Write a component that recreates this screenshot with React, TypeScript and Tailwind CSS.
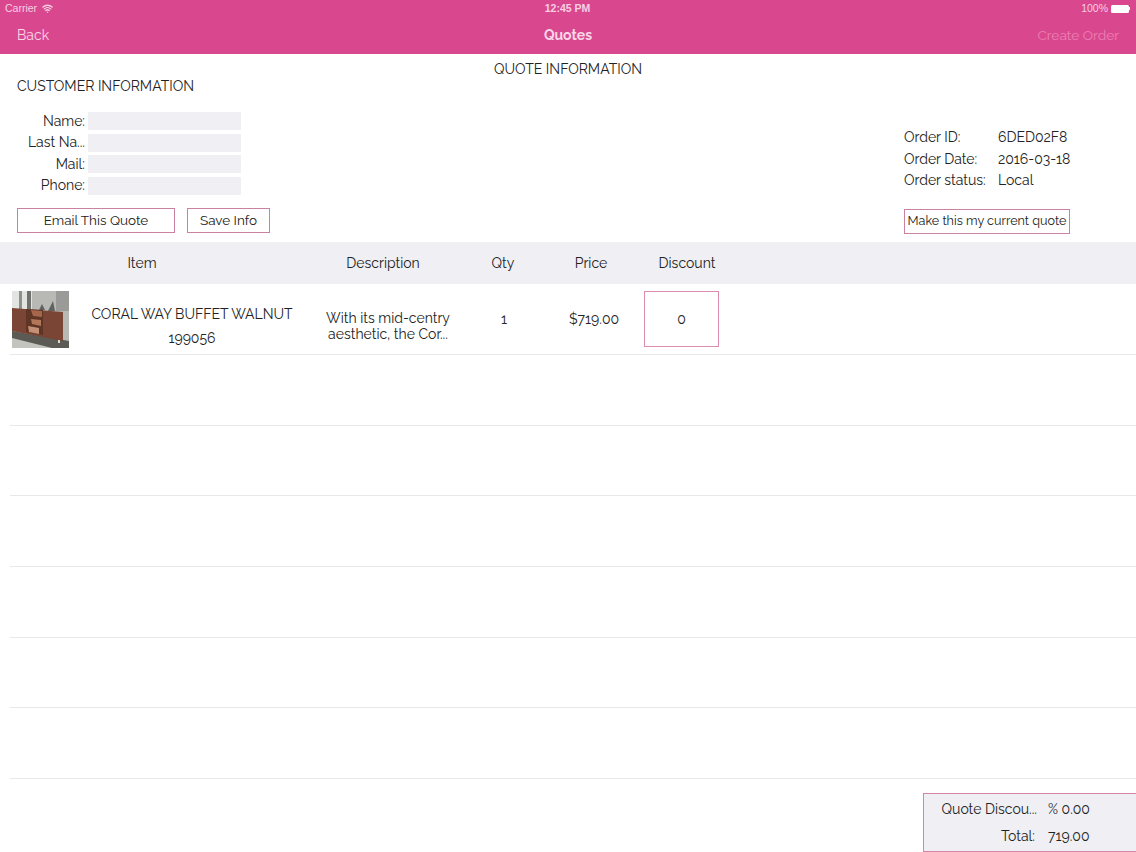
import React from 'react';
import { Wifi } from 'lucide-react';

const FIELDS = [
  { label: 'Name:' },
  { label: 'Last Na...' },
  { label: 'Mail:' },
  { label: 'Phone:' },
];

const ORDER_INFO = [
  { label: 'Order ID:', value: '6DED02F8' },
  { label: 'Order Date:', value: '2016-03-18' },
  { label: 'Order status:', value: 'Local' },
];

// product photo, blurred a little like the source thumbnail
function Thumb() {
  return (
    <svg viewBox="0 0 57 57" className="w-[57px] h-[57px] shrink-0">
      <defs>
        <filter id="soft" x="0" y="0" width="100%" height="100%">
          <feGaussianBlur stdDeviation="0.5" />
        </filter>
      </defs>
      <g filter="url(#soft)">
        <rect width="57" height="57" fill="#b8b8b4" />
        <rect x="0" y="0" width="20" height="20" fill="#e2e4e2" />
        <rect x="7" y="0" width="3" height="19" fill="#8f908c" />
        <rect x="15" y="0" width="4" height="19" fill="#70716d" />
        <rect x="44" y="0" width="13" height="20" fill="#9a9a98" />
        <path d="M27 19l3-6 3 6zM36 20l5-10 2 10z" fill="#5f6260" />
        <path d="M0 40L57 50V57H0z" fill="#5b5a54" />
        <path d="M0 47L40 57H0z" fill="#c4c4be" />
        <path d="M0 17L51 21V50L0 40z" fill="#7a4434" />
        <path d="M14 18L31 19V44L14 41z" fill="#5e3428" />
        <path d="M19 19L30 20V26L21 25z" fill="#a5664c" />
        <path d="M19 28L29 29V35L20 33z" fill="#b27658" />
        <path d="M16 35L27 37V43L17 41z" fill="#c39074" />
        <rect x="46" y="49" width="2" height="3" fill="#d8d8d2" />
      </g>
    </svg>
  );
}

function PinkButton({ children, className }: { children: React.ReactNode; className: string }) {
  return (
    <button className={`border border-[#c9829f] bg-white text-[#222] h-[25px] flex items-center justify-center whitespace-nowrap ${className}`}>
      {children}
    </button>
  );
}

export default function App() {
  return (
    <div className="w-[1136px] h-[852px] overflow-hidden bg-white text-[#222] flex flex-col font-['Raleway','Lato','Liberation_Sans',sans-serif]">
      <div className="h-[54px] shrink-0 bg-[#d9488f] text-white">
        <div className="h-[17px] grid grid-cols-3 items-center pl-[5px] pr-[6px] text-[10.5px] text-[#f8cfe2] font-['Liberation_Sans',sans-serif]">
          <div className="flex items-center gap-[5px]">
            <span>Carrier</span>
            <Wifi className="w-[11px] h-[11px]" strokeWidth={3} />
          </div>
          <span className="text-center font-bold">12:45 PM</span>
          <div className="flex items-center justify-end gap-[3px]">
            <span>100%</span>
            <div className="w-[18px] h-[8px] bg-white rounded-[1.5px]" />
            <div className="w-[1px] h-[3px] bg-white -ml-[3px]" />
          </div>
        </div>
        <div className="h-[36px] grid grid-cols-3 items-center px-[17px] text-[14px]">
          <span className="text-[#fad7e7]">Back</span>
          <span className="text-center font-bold text-[#fad7e7]">Quotes</span>
          <span className="text-right text-[13.7px] text-[#ed7fb3]">Create Order</span>
        </div>
      </div>

      <div className="h-[188px] shrink-0 flex flex-col text-[14px]">
        <div className="text-center leading-[18px] mt-[6px]">QUOTE INFORMATION</div>
        <div className="flex flex-1 justify-between pl-[17px] pr-[66px]">
          <div>
            <div className="leading-[18px] mt-[-1px]">CUSTOMER INFORMATION</div>
            <div className="mt-[17px] flex flex-col gap-[3.67px]">
              {FIELDS.map(f => (
                <div key={f.label} className="flex items-center h-[18px] gap-[3px]">
                  <span className="w-[68px] text-right">{f.label}</span>
                  <div className="w-[153px] h-[18px] bg-[#efeff4]" />
                </div>
              ))}
            </div>
            <div className="flex gap-[12px] mt-[13px] text-[13.5px]">
              <PinkButton className="w-[158px]">Email This Quote</PinkButton>
              <PinkButton className="w-[83px]">Save Info</PinkButton>
            </div>
          </div>
          <div className="pt-[49px] w-[166px]">
            <div className="flex flex-col">
              {ORDER_INFO.map(o => (
                <div key={o.label} className="flex h-[21.5px] items-center whitespace-nowrap">
                  <span className="w-[94px] shrink-0">{o.label}</span>
                  <span>{o.value}</span>
                </div>
              ))}
            </div>
            <PinkButton className="w-[166px] mt-[17px] text-[12.6px]">Make this my current quote</PinkButton>
          </div>
        </div>
      </div>

      <div className="h-[42px] shrink-0 bg-[#efeff4] grid grid-cols-[284px_198px_42px_134px_58px] items-center text-[14px] text-center">
        <span>Item</span>
        <span>Description</span>
        <span>Qty</span>
        <span>Price</span>
        <span className="whitespace-nowrap">Discount</span>
      </div>

      <div className="h-[71px] shrink-0 ml-[10px] border-b border-[#e8e8ea] flex items-center text-[14px]">
        <div className="flex items-center -ml-[10px] pl-[12px]">
          <Thumb />
          <div className="w-[246px] text-center pt-[16px]">
            <div className="leading-[22px]">CORAL WAY BUFFET WALNUT</div>
            <div className="leading-[26px]">199056</div>
          </div>
          <div className="w-[146px] text-center leading-[16px] pt-[14px]">With its mid-centry<br />aesthetic, the Cor...</div>
          <div className="w-[86px] text-center">1</div>
          <div className="w-[94px] text-center">$719.00</div>
          <div className="ml-[3px] w-[75px] h-[56px] border border-[#dc8cae] flex items-center justify-center">0</div>
        </div>
      </div>

      {[0, 1, 2, 3, 4, 5].map(i => (
        <div key={i} className="h-[70.67px] shrink-0 ml-[10px] border-b border-[#e8e8ea]" />
      ))}

      <div className="flex-1 flex justify-end items-start pt-[14px]">
        <div className="w-[213px] h-[59px] border border-[#d684a8] border-r-0 bg-[#efeff4] text-[14px] flex flex-col justify-center pt-[1px]">
          <div className="flex h-[27px] items-center">
            <span className="w-[113px] text-right">Quote Discou...</span>
            <span className="ml-[11px]">% 0.00</span>
          </div>
          <div className="flex h-[27px] items-center">
            <span className="w-[111px] text-right">Total:</span>
            <span className="ml-[13px]">719.00</span>
          </div>
        </div>
      </div>
    </div>
  );
}
